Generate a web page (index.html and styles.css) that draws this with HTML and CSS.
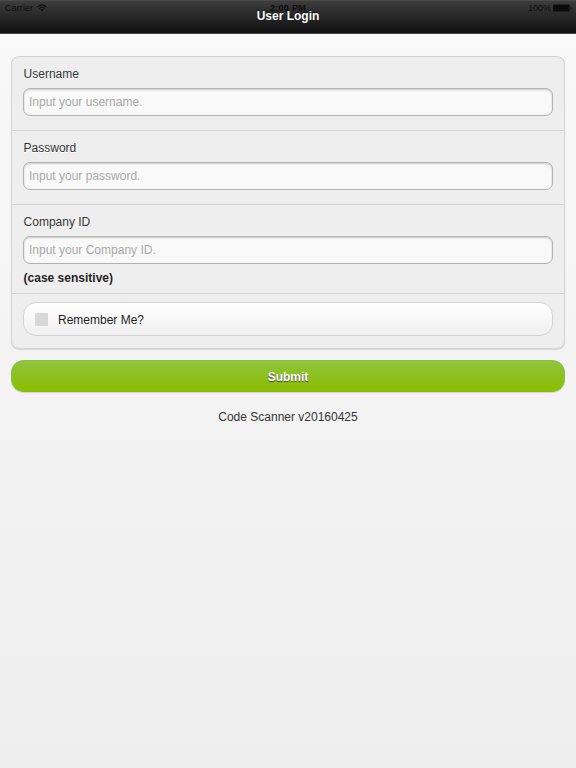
FILE: index.html
```html
<!DOCTYPE html>
<html lang="en">
<head>
  <meta charset="utf-8">
  <title>User Login</title>
  <link rel="stylesheet" href="styles.css">
</head>
<body>
  <!-- Header -->
  <header class="header">
    <div class="status-bar">
      <span class="carrier">Carrier
        <svg class="wifi" viewBox="0 0 20 15" fill="none" stroke="currentColor" stroke-width="2.2">
          <path d="M1.2 5.6Q10-2.4 18.8 5.6M4.6 9Q10 4.2 15.4 9"/>
          <path d="M10 14.5L6.8 11.4Q10 8.6 13.2 11.4Z" fill="currentColor" stroke="none"/>
        </svg>
      </span>
      <span class="time">2:00 PM</span>
      <span class="power">100%
        <svg class="battery" viewBox="0 0 19 8" fill="currentColor">
          <rect x="0" y="0.5" width="16.5" height="7" rx="1"/>
          <path d="M17.2 2.5Q19.6 4 17.2 5.5Z"/>
        </svg>
      </span>
    </div>
    <h1>User Login</h1>
  </header>

  <!-- Login Form -->
  <form class="content">
    <div class="card">
      <div class="row">
        <label for="username">Username</label>
        <input type="text" id="username" placeholder="Input your username.">
      </div>
      <div class="row">
        <label for="password">Password</label>
        <input type="password" id="password" placeholder="Input your password.">
      </div>
      <div class="row company">
        <label for="company">Company ID</label>
        <input type="text" id="company" placeholder="Input your Company ID.">
        <strong>(case sensitive)</strong>
      </div>
      <div class="row remember-row">
        <label class="remember">
          <input type="checkbox" class="checkbox">
          <span>Remember Me?</span>
        </label>
      </div>
    </div>
    <button type="button" class="submit">Submit</button>
    <p class="version">Code Scanner v20160425</p>
  </form>
</body>
</html>
```

FILE: styles.css
```css
* {
  box-sizing: border-box;
}
html {
  height: 100%;
}
body {
  margin: 0;
  min-height: 100%;
  font-family: "Liberation Sans", Arial, sans-serif;
  font-size: 12px;
  line-height: 16px;
  color: #333;
  background: linear-gradient(#f9f9f9, #eee);
}
.header {
  position: relative;
  height: 34px;
  border-top: 1px solid #4a4a4a;
  border-bottom: 1px solid #444;
  background: linear-gradient(#3c3c3c, #111);
}
.header h1 {
  position: relative;
  margin: 0;
  padding-top: 7px;
  font-size: 12px;
  line-height: 16px;
  text-align: center;
  color: #fff;
  text-shadow: 0 -1px 1px rgba(0, 0, 0, 0.6);
}
/* iOS status bar sits over the header */
.status-bar {
  position: absolute;
  top: 0;
  left: 0;
  right: 0;
  display: grid;
  grid-template-columns: 1fr auto 1fr;
  padding: 0 5px;
  font-size: 9px;
  line-height: 14px;
  color: #0c0c0c;
}
.carrier,
.power {
  display: flex;
  align-items: center;
  gap: 4px;
  letter-spacing: 0.1px;
}
.power {
  justify-content: flex-end;
  gap: 2px;
  letter-spacing: 0;
  margin-right: -1px;
}
.time {
  font-weight: bold;
  letter-spacing: 0.3px;
}
.wifi {
  width: 10px;
  height: 7.5px;
}
.battery {
  width: 19px;
  height: 8px;
}
.content {
  padding: 22px 11px 0 11px;
}
.card {
  border: 1px solid #d3d3d3;
  border-radius: 8px;
  background: #eee;
  box-shadow: 0 1px 1px rgba(0, 0, 0, 0.12);
}
.row {
  height: 74px;
  padding: 9px 11px 0;
  border-bottom: 1px solid #d3d3d3;
}
.row label,
.company strong {
  display: block;
  padding-left: 0.6px;
  text-shadow: 0 1px 0 #fff;
}
.row input[type='text'],
.row input[type='password'] {
  display: block;
  width: 100%;
  height: 28px;
  margin-top: 6px;
  padding: 0 5px;
  font-family: inherit;
  font-size: 12px;
  border: 1px solid #b3b3b3;
  border-radius: 7px;
  background: #f9f9f9;
  box-shadow: inset 0 1px 2px rgba(0, 0, 0, 0.2);
}
.row input::placeholder {
  color: #a9a9a9;
}
.company {
  height: 89px;
}
.company strong {
  margin-top: 6px;
  color: #222;
}
.remember-row {
  height: 54px;
  padding-top: 8px;
  border-bottom: none;
}
.row .remember {
  display: flex;
  align-items: center;
  height: 34px;
  padding-left: 11px;
  color: #222;
  border: 1px solid #d3d3d3;
  border-radius: 13px;
  background: linear-gradient(#fff, #f1f1f1);
}
.remember span {
  padding-top: 2px;
}
.checkbox {
  appearance: none;
  width: 13px;
  height: 13px;
  margin: 0 10px 0 0;
  border-radius: 1px;
  background: #d8d8d8;
}
.submit {
  display: block;
  width: 100%;
  height: 32px;
  margin-top: 11px;
  padding: 1px 0 0;
  font-family: inherit;
  font-size: 12px;
  font-weight: bold;
  color: #fff;
  text-shadow: 0 1px 1px #444;
  border: 1px solid #8fbf3c;
  border-bottom-color: #88b80c;
  border-radius: 13px;
  background: linear-gradient(#8fc43f, #8bbd00);
  box-shadow: 0 1px 1px rgba(0, 0, 0, 0.12);
}
.version {
  margin: 17px 0 0;
  text-align: center;
}
```
